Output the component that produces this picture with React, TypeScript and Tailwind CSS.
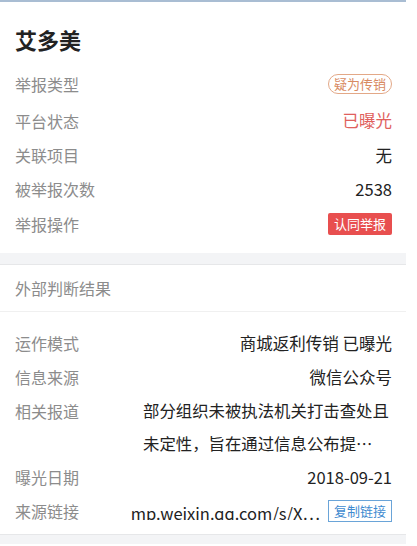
import React from "react"

const FONT = { fontFamily: '"Noto Sans CJK SC", "Noto Sans", sans-serif' }

function Row({
  label,
  h,
  children,
}: {
  label: string
  h: string
  children: React.ReactNode
}) {
  return (
    <div className={`flex items-center justify-between pl-[15px] pr-[14px] ${h}`}>
      <span className="text-[16px] leading-[20px] text-[#8c8c8c]">{label}</span>
      <div className="flex items-center">{children}</div>
    </div>
  )
}

export default function App() {
  return (
    <div className="min-h-[546px] w-[417px] bg-white" style={FONT}>
      <div className="w-[406px]">
        <div className="h-[2px] bg-[#a9bdd3]" />
        <div className="pl-[15px] pt-[23px] pb-[12px] text-[22px] font-bold leading-[28px] text-[#222]">
          艾多美
        </div>

        <Row label="举报类型" h="h-[38px]">
          <span className="rounded-full border border-[#e3a887] px-[5px] text-[13px] leading-[18px] text-[#d88a62]">
            疑为传销
          </span>
        </Row>
        <Row label="平台状态" h="h-[35px]">
          <span className="text-[16.5px] text-[#e0605c]">已曝光</span>
        </Row>
        <Row label="关联项目" h="h-[34px]">
          <span className="text-[16.5px] text-[#222]">无</span>
        </Row>
        <Row label="被举报次数" h="h-[34px]">
          <span className="text-[16.5px] text-[#222]">2538</span>
        </Row>
        <Row label="举报操作" h="h-[36px]">
          <span className="rounded-[2px] bg-[#e84f4f] px-[6px] text-[13px] leading-[22px] text-white">
            认同举报
          </span>
        </Row>

        <div className="mt-[11px] h-[12px] border-b border-[#e6e7e9] bg-[#f3f4f6]" />

        <div className="flex h-[47px] items-center border-b border-[#f0f0f0] pl-[15px] text-[16px] text-[#8c8c8c]">
          外部判断结果
        </div>

        <div className="pt-[14px]">
          <Row label="运作模式" h="h-[34px]">
            <span className="text-[16.5px] text-[#222]">商城返利传销 已曝光</span>
          </Row>
          <Row label="信息来源" h="h-[34px]">
            <span className="text-[16.5px] text-[#222]">微信公众号</span>
          </Row>
          <div className="flex items-start justify-between pl-[15px] pr-[14px]">
            <span className="pt-[7px] text-[16px] leading-[20px] text-[#8c8c8c]">相关报道</span>
            <div className="flex w-[249px] flex-col text-[16.4px] leading-[33px] text-[#222]">
              <span className="whitespace-nowrap">部分组织未被执法机关打击查处且</span>
              <span className="whitespace-nowrap">未定性，旨在通过信息公布提…</span>
            </div>
          </div>
          <Row label="曝光日期" h="h-[34px]">
            <span className="text-[16.5px] text-[#222]">2018-09-21</span>
          </Row>
          <Row label="来源链接" h="h-[34px]">
            <span className="block h-[17px] overflow-hidden whitespace-nowrap text-[16.5px] leading-[20px] text-[#222]">
              mp.weixin.qq.com/s/X…
            </span>
            <span className="ml-[8px] border border-[#6aa4d8] px-[5px] text-[13px] leading-[20px] text-[#3f8bd0]">
              复制链接
            </span>
          </Row>
        </div>

        <div className="mt-[6px] h-[10px] border-t border-[#e6e7e9] bg-[#f3f4f6]" />
      </div>
    </div>
  )
}
